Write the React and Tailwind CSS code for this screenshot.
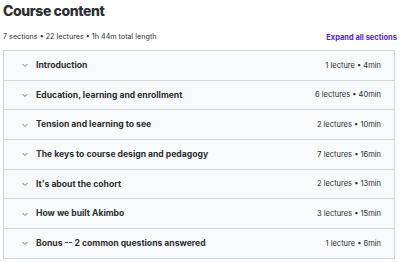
import React from "react";

const sections = [
  ["Introduction", "1 lecture • 4min"],
  ["Education, learning and enrollment", "6 lectures • 40min"],
  ["Tension and learning to see", "2 lectures • 10min"],
  ["The keys to course design and pedagogy", "7 lectures • 16min"],
  ["It's about the cohort", "2 lectures • 13min"],
  ["How we built Akimbo", "3 lectures • 15min"],
  ["Bonus -- 2 common questions answered", "1 lecture • 6min"],
];

function Chevron() {
  return (
    <svg width="8" height="8" viewBox="0 0 8 8" className="shrink-0">
      <path d="M1.5 3 L4 5.5 L6.5 3" fill="none" stroke="#6a6f73" strokeWidth="0.9" />
    </svg>
  );
}

export default function App() {
  return (
    <div className="w-[400px] h-[262px] bg-white px-[3px] font-['Inter',sans-serif] text-[#2d2f31]">
      <h2 className="pt-[1px] text-[14px] leading-[20px] font-extrabold tracking-[-0.4px]">Course content</h2>
      <div className="flex items-center justify-between h-[17px] mt-[8px]">
        <span className="text-[7.2px] text-[#2d2f31]">7 sections • 22 lectures • 1h 44m total length</span>
        <span className="text-[7.5px] font-bold text-[#5624d0]">Expand all sections</span>
      </div>
      <div className="mt-[4px] border border-[#d1d7dc] w-[392px]">
        {sections.map(([t, m], i) => (
          <div
            key={i}
            className={`flex items-center h-[28.67px] box-content bg-[#f7f9fa] pl-[17px] pr-[13px] ${i > 0 ? "border-t border-[#d1d7dc]" : ""}`}
          >
            <Chevron />
            <span className="ml-[7px] text-[8.6px] font-bold flex-1">{t}</span>
            <span className="text-[7.5px] text-[#2d2f31]">{m}</span>
          </div>
        ))}
      </div>
    </div>
  );
}
